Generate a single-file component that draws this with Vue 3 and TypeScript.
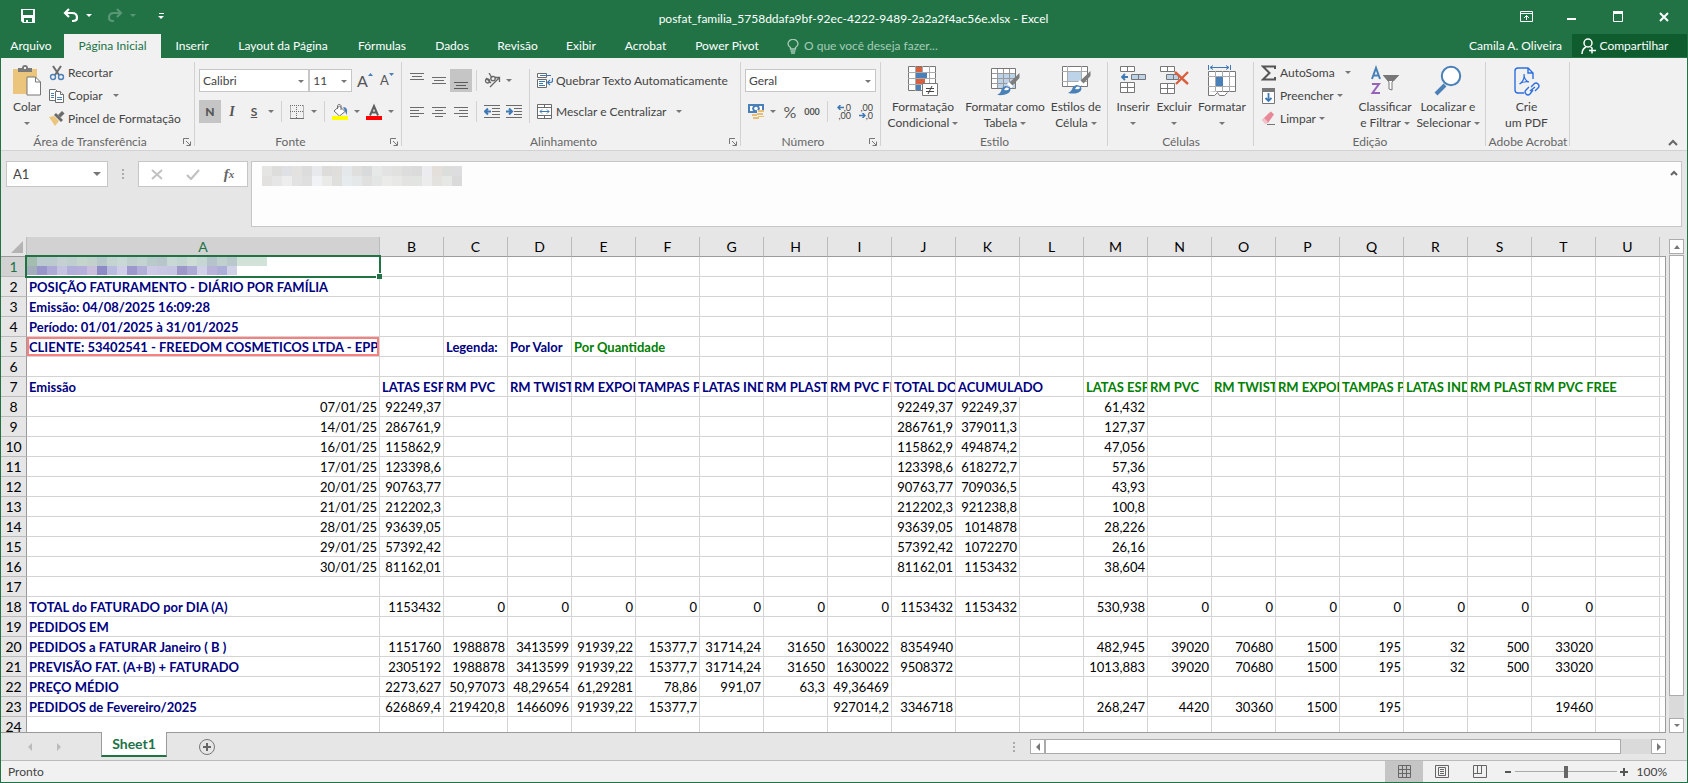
<script setup lang="ts">
import { computed, ref } from 'vue'

interface RibbonTab {
  label: string
  width: number
}

interface Cell {
  text: string
  classes: string[]
}

const tabs: RibbonTab[] = [
  { label: 'Arquivo', width: 60 },
  { label: 'Página Inicial', width: 97 },
  { label: 'Inserir', width: 62 },
  { label: 'Layout da Página', width: 120 },
  { label: 'Fórmulas', width: 78 },
  { label: 'Dados', width: 62 },
  { label: 'Revisão', width: 69 },
  { label: 'Exibir', width: 58 },
  { label: 'Acrobat', width: 71 },
  { label: 'Power Pivot', width: 92 },
]
const activeTab = ref('Página Inicial')
const fontName = ref('Calibri')
const fontSize = ref('11')
const numberFormat = ref('Geral')
const cellName = ref('A1')
const zoom = ref(100)

const columns = 'ABCDEFGHIJKLMNOPQRSTU'.split('')
const families = ['LATAS ESP', 'RM PVC', 'RM TWIST', 'RM EXPORT', 'TAMPAS PET', 'LATAS IND', 'RM PLAST', 'RM PVC FREE']

// Daily invoicing: date, value, day total, running total, quantity
const daily: string[][] = [
  ['07/01/25', '92249,37', '92249,37', '92249,37', '61,432'],
  ['14/01/25', '286761,9', '286761,9', '379011,3', '127,37'],
  ['16/01/25', '115862,9', '115862,9', '494874,2', '47,056'],
  ['17/01/25', '123398,6', '123398,6', '618272,7', '57,36'],
  ['20/01/25', '90763,77', '90763,77', '709036,5', '43,93'],
  ['21/01/25', '212202,3', '212202,3', '921238,8', '100,8'],
  ['28/01/25', '93639,05', '93639,05', '1014878', '28,226'],
  ['29/01/25', '57392,42', '57392,42', '1072270', '26,16'],
  ['30/01/25', '81162,01', '81162,01', '1153432', '38,604'],
]

const sheet: string[][] = [
  [],
  ['POSIÇÃO FATURAMENTO - DIÁRIO POR FAMÍLIA'],
  ['Emissão: 04/08/2025 16:09:28'],
  ['Período: 01/01/2025 à 31/01/2025'],
  ['CLIENTE: 53402541 - FREEDOM COSMETICOS LTDA - EPP', '', 'Legenda:', 'Por Valor', 'Por Quantidade'],
  [],
  ['Emissão', ...families, 'TOTAL DO DIA', 'ACUMULADO', '', ...families],
  ...daily.map(([date, value, total, sum, qty]) => [date, value, '', '', '', '', '', '', '', total, sum, '', qty]),
  [],
  ['TOTAL do FATURADO por DIA (A)', '1153432', '0', '0', '0', '0', '0', '0', '0', '1153432', '1153432', '', '530,938', '0', '0', '0', '0', '0', '0', '0'],
  ['PEDIDOS EM'],
  ['PEDIDOS a FATURAR Janeiro ( B )', '1151760', '1988878', '3413599', '91939,22', '15377,7', '31714,24', '31650', '1630022', '8354940', '', '', '482,945', '39020', '70680', '1500', '195', '32', '500', '33020'],
  ['PREVISÃO FAT. (A+B) + FATURADO', '2305192', '1988878', '3413599', '91939,22', '15377,7', '31714,24', '31650', '1630022', '9508372', '', '', '1013,883', '39020', '70680', '1500', '195', '32', '500', '33020'],
  ['PREÇO MÉDIO', '2273,627', '50,97073', '48,29654', '61,29281', '78,86', '991,07', '63,3', '49,36469'],
  ['PEDIDOS de Fevereiro/2025', '626869,4', '219420,8', '1466096', '91939,22', '15377,7', '', '', '927014,2', '3346718', '', '', '268,247', '4420', '30360', '1500', '195', '', '', '19460'],
  [],
]

const spilling = ['4-4', '6-10', '6-19']

const grid = computed<Cell[][]>(() =>
  sheet.map((row, r) =>
    columns.map((_, c) => {
      const text = row[c] ?? ''
      const classes: string[] = []
      if (/^[\d.,/]+$/.test(text)) classes.push('num')
      else if (text) {
        classes.push('label')
        if (c >= 12 || (r === 4 && c === 4)) classes.push('green')
        if (row[c + 1]) classes.push('clip')
      }
      if (spilling.includes(`${r}-${c}`)) classes.push('spill')
      return { text, classes }
    }),
  ),
)

const formulaMask: string[][] = [
  ['#e5e5e4', '#dddddc', '#dfe0e4', '#e3e2e0', '#dcdcdc', '#e8e9ec', '#dddcda', '#dfdedc', '#e5e8ea', '#dfdfde', '#d9dadb', '#e7e9e9', '#e3e3e3', '#e1e1e0', '#dddddd', '#dbdbdb', '#ececf0', '#e4dfda', '#dcdedc', '#dddddf'],
  ['#e2e1e0', '#e6e6e6', '#ededed', '#e2e2e2', '#dfdfe0', '#f0f2f5', '#eaeae8', '#dfdfde', '#e6ebee', '#e5e8e8', '#e0e0df', '#e4e6e6', '#ebebe9', '#e8e8e6', '#e3e3e2', '#e2e4e2', '#ececec', '#e4e2de', '#e6e8e6', '#dadadb'],
]
const cellMask: string[][] = [
  ['#a3bdb1', '#bacacd', '#bacacd', '#c4d0d2', '#bfcfcd', '#c4d5ce', '#c1d2cc', '#b7c8ca', '#c4d5d1', '#c8d8d4', '#bfcfcd', '#c3d3d1', '#b9cacb', '#b7c7c9', '#c8d8d4', '#c3d5d0', '#cdddd6', '#c6d6d3', '#b5c3cb', '#c0d0ce', '#b8c8cb', '#d1e3d9', '#d1e3d9', '#d1e3d9'],
  ['#a2aebb', '#9795ca', '#adabd6', '#c4c4e2', '#b1afd9', '#b6afdb', '#c9bfdd', '#8d8ac6', '#b9bbdf', '#cfcde8', '#9c98cd', '#b1afd8', '#cdc9e6', '#cac7e4', '#c7c4e4', '#9e98c9', '#acaad5', '#d0d0e8', '#b9b3d9', '#adafd8', '#d1d1e8'],
]
</script>

<template>
  <div class="window">
    <header class="titlebar">
      <div class="quick">
        <button class="q-save" aria-label="Salvar">
          <svg width="16" height="16" viewBox="0 0 16 16"><path d="M1 1h14v14H3l-2-2z" fill="#fff" /><path d="M3 2h10v5H3zM4 10h8v4H4z" fill="#217346" /><path d="M6 12h2v2H6z" fill="#fff" /></svg>
        </button>
        <button class="q-undo" aria-label="Desfazer">
          <svg width="16" height="16" viewBox="0 0 16 16"><path d="M6 1L2 5l4 4M2 5h7c3 0 5 1.800 5 4.500S12 13 10 13H9" fill="none" stroke="#fff" stroke-width="2.200" /></svg>
        </button>
        <button class="q-caret" aria-label="Opções de desfazer"><i class="caret white"></i></button>
        <button class="q-redo dim" aria-label="Refazer">
          <svg width="16" height="16" viewBox="0 0 16 16"><path d="M10 1l4 4-4 4M14 5H7c-3 0-5 1.800-5 4.500S4 13 6 13h1" fill="none" stroke="#fff" stroke-width="2.200" /></svg>
        </button>
        <button class="q-caret dim" aria-label="Opções de refazer"><i class="caret white"></i></button>
        <button class="q-more" aria-label="Personalizar barra"><span></span><i class="caret white"></i></button>
      </div>
      <h1 class="title">posfat_familia_5758ddafa9bf-92ec-4222-9489-2a2a2f4ac56e.xlsx - Excel</h1>
      <div class="win-buttons">
        <button aria-label="Opções de exibição da faixa"><svg width="13" height="12" viewBox="0 0 13 12" fill="none" stroke="#fff"><path d="M.5.5h12v10H.5zM0 2.500h13M6.500 9V4.500M4 7l2.500-2.500L9 7" /></svg></button>
        <button aria-label="Minimizar"><svg width="10" height="12" viewBox="0 0 10 12"><path d="M0 7h9v2H0z" fill="#fff" /></svg></button>
        <button aria-label="Maximizar"><svg width="10" height="11" viewBox="0 0 10 11"><path d="M.5.5h9v10h-9z" fill="none" stroke="#fff" /><path d="M0 0h10v3H0z" fill="#fff" /></svg></button>
        <button aria-label="Fechar"><svg width="10" height="10" viewBox="0 0 10 10"><path d="M1 1l8 8M9 1L1 9" stroke="#fff" stroke-width="2" /></svg></button>
      </div>
    </header>

    <nav class="tabs">
      <button
        v-for="tab in tabs"
        :key="tab.label"
        :class="{ active: tab.label === activeTab }"
        :style="{ width: tab.width + 'px' }"
        @click="activeTab = tab.label"
      >{{ tab.label }}</button>
      <button class="tell-me">
        <svg width="12" height="15" viewBox="0 0 12 15" fill="none" stroke="#a6cbb6" stroke-width="1.300"><path d="M3.500 10V8.500C2 7.500 1 6.500 1 5a4.800 4.500 0 0 1 10 0c0 1.500-1 2.500-2.500 3.500V10zM3.500 12h5M4 14h4" /></svg>
        <span>O que você deseja fazer...</span>
      </button>
      <span class="user">Camila A. Oliveira</span>
      <button class="share">
        <svg width="15" height="16" viewBox="0 0 15 16" fill="none" stroke="#fff" stroke-width="1.500"><circle cx="7" cy="5" r="4" /><path d="M1 16c0-4 2-6 4-7M9.500 9l1.500 1M11 9.500v6M8 12.500h7" /></svg>
        <span>Compartilhar</span>
      </button>
    </nav>

    <section class="ribbon" aria-label="Página Inicial">
      <div class="group clipboard">
        <div class="body top4">
          <button class="big w-paste">
            <svg width="30" height="32" viewBox="0 0 30 32"><path d="M1 4h24v25H1z" fill="#ecc57c" /><path d="M6 3h4a3 3 0 0 1 6 0h4v4H6z" fill="#7a7a7a" /><path d="M12 2h2v2h-2z" fill="#f1f1f1" /><path d="M15 12h8.500L28.500 17v13H15z" fill="#fff" stroke="#777" /><path d="M23.500 12v5h5" fill="none" stroke="#777" /></svg>
            <span>Colar</span><span><i class="caret"></i></span>
          </button>
          <div class="list">
            <button>
              <svg width="16" height="16" viewBox="0 0 16 16" fill="none"><path d="M4 1l6 9M12 1L6 10" stroke="#6b6b6b" stroke-width="2" /><circle cx="4" cy="12" r="2.500" stroke="#4a80b8" stroke-width="1.400" /><circle cx="12" cy="12" r="2.500" stroke="#4a80b8" stroke-width="1.400" /></svg>
              <span>Recortar</span>
            </button>
            <button>
              <svg width="16" height="16" viewBox="0 0 16 16" fill="#fff" stroke="#6f6f6f"><path d="M.5 1.500h6l2 2v9h-8z" /><path d="M6.500 3.500h5l3 3v8h-8z" /><path d="M11.500 3.500v3h3" /><path d="M2 5.500h3M2 7.500h3M2 9.500h3M8 9.500h5M8 11.500h5" stroke="#4a80b8" /></svg>
              <span>Copiar</span><i class="caret far"></i>
            </button>
            <button>
              <svg width="16" height="16" viewBox="0 0 16 16"><path d="M0 6l5-1 5 5-4 5z" fill="#ecc57c" /><path d="M5 4l2-2 7 7-2 2z" fill="#6b6b6b" /><path d="M9 4l4-4 2.500 2.500-4 4z" fill="#6b6b6b" /></svg>
              <span>Pincel de Formatação</span>
            </button>
          </div>
        </div>
        <div class="foot"><span>Área de Transferência</span><button aria-label="Mais opções" class="launch"><svg width="8" height="8" viewBox="0 0 8 8" fill="none" stroke="#777"><path d="M.5 6V.5H6M3 3l4 4M7.500 3.500v4h-4" /></svg></button></div>
      </div>

      <div class="group font">
        <div class="body rows">
          <div class="row">
            <span class="combo c-font"><select v-model="fontName" aria-label="Fonte"><option>Calibri</option></select><i class="caret"></i></span>
            <span class="combo c-size"><select v-model="fontSize" aria-label="Tamanho da fonte"><option>11</option></select><i class="caret"></i></span>
            <button class="ib grow" aria-label="Aumentar fonte"><span class="glyph g-16">A</span><svg width="5" height="3" viewBox="0 0 5 3"><path d="M0 3L2.500 0 5 3z" fill="#4a80b8" /></svg></button>
            <button class="ib grow" aria-label="Diminuir fonte"><span class="glyph g-13">A</span><svg width="5" height="3" viewBox="0 0 5 3"><path d="M0 0l2.500 3L5 0z" fill="#4a80b8" /></svg></button>
          </div>
          <div class="row">
            <button class="ib on glyph bold" aria-label="Negrito">N</button>
            <button class="ib glyph italic" aria-label="Itálico">I</button>
            <button class="ib glyph under" aria-label="Sublinhado">S</button>
            <button class="cb" aria-label="Opções de sublinhado"><i class="caret"></i></button>
            <i class="sep"></i>
            <button class="ib" aria-label="Bordas"><svg width="14" height="14" viewBox="0 0 14 14" fill="none" stroke="#6f6f6f"><path d="M.5.500v13M13.500.500v13M0 .500h14M0 6.500h14M6.500 0v13" stroke-dasharray="1 1" /><path d="M0 13.500h14" /></svg></button>
            <button class="cb" aria-label="Opções de bordas"><i class="caret"></i></button>
            <i class="sep"></i>
            <button class="ib" aria-label="Cor de preenchimento"><svg width="16" height="17" viewBox="0 0 16 17"><path d="M7.500 3L13 8.500 7.500 13 2 8z" fill="#fff" stroke="#6f6f6f" /><path d="M5.500 6V2.500a2 2 0 0 1 3.500 0V7" fill="none" stroke="#6f6f6f" /><path d="M11 4c4 0 5 3 3.500 8L13 8z" fill="#4a80b8" /><path d="M0 13h16v4H0z" fill="#ff0" /></svg></button>
            <button class="cb" aria-label="Opções de preenchimento"><i class="caret"></i></button>
            <button class="ib" aria-label="Cor da fonte"><svg width="16" height="17" viewBox="0 0 16 17"><path d="M4 12.500L8 3l4 9.500M5.500 9.500h5" fill="none" stroke="#5f5f5f" stroke-width="2" /><path d="M0 13h16v4H0z" fill="red" /></svg></button>
            <button class="cb" aria-label="Opções de cor da fonte"><i class="caret"></i></button>
          </div>
        </div>
        <div class="foot"><span>Fonte</span><button aria-label="Mais opções" class="launch"><svg width="8" height="8" viewBox="0 0 8 8" fill="none" stroke="#777"><path d="M.5 6V.5H6M3 3l4 4M7.500 3.500v4h-4" /></svg></button></div>
      </div>

      <div class="group align">
        <div class="body">
          <div class="rows">
            <div class="row">
              <button class="ib" aria-label="Alinhar em cima"><svg width="14" height="16" viewBox="0 0 14 16" stroke="#6b6b6b"><path d="M0 .5h14M2 3.500h10M0 6.500h14" /></svg></button>
              <button class="ib" aria-label="Alinhar no meio"><svg width="14" height="16" viewBox="0 0 14 16" stroke="#6b6b6b"><path d="M0 4.500h14M2 7.500h10M0 10.500h14" /></svg></button>
              <button class="ib on" aria-label="Alinhar embaixo"><svg width="14" height="16" viewBox="0 0 14 16" stroke="#5b5b5b"><path d="M0 9.500h14M2 12.500h10M0 15.500h14" /></svg></button>
              <i class="sep"></i>
              <button class="ib" aria-label="Orientação"><svg width="17" height="16" viewBox="0 0 17 16" fill="none" stroke="#666" stroke-width="1.300"><path d="M6 14L15 5M11 4.500h4.500V9" /><circle cx="3.500" cy="8" r="2" /><circle cx="9" cy="5.500" r="2.200" /><path d="M2 5l5 5M5 0l3 5" /></svg></button>
              <button class="cb" aria-label="Opções de orientação"><i class="caret"></i></button>
            </div>
            <div class="row">
              <button class="ib" aria-label="Alinhar à esquerda"><svg width="14" height="10" viewBox="0 0 14 10" stroke="#6b6b6b"><path d="M0 .5h14M0 3.500h9M0 6.500h14M0 9.500h9" /></svg></button>
              <button class="ib" aria-label="Centralizar"><svg width="14" height="10" viewBox="0 0 14 10" stroke="#6b6b6b"><path d="M0 .5h14M3 3.500h8M0 6.500h14M3 9.500h8" /></svg></button>
              <button class="ib" aria-label="Alinhar à direita"><svg width="14" height="10" viewBox="0 0 14 10" stroke="#6b6b6b"><path d="M0 .5h14M5 3.500h9M0 6.500h14M5 9.500h9" /></svg></button>
              <i class="sep"></i>
              <button class="ib" aria-label="Diminuir recuo"><svg width="16" height="13" viewBox="0 0 16 13" fill="none"><path d="M0 .5h16M8 3.500h8M8 6.500h8M8 9.500h8M0 12.500h16" stroke="#6b6b6b" /><path d="M7 6.500H1.500M4 3.500l-3 3 3 3" stroke="#3f79b5" stroke-width="2" /></svg></button>
              <button class="ib" aria-label="Aumentar recuo"><svg width="16" height="13" viewBox="0 0 16 13" fill="none"><path d="M0 .5h16M8 3.500h8M8 6.500h8M8 9.500h8M0 12.500h16" stroke="#6b6b6b" /><path d="M0 6.500h5.500M3 3.500l3 3-3 3" stroke="#3f79b5" stroke-width="2" /></svg></button>
            </div>
          </div>
          <i class="sep tall"></i>
          <div class="rows wide">
            <button class="tb">
              <svg width="16" height="16" viewBox="0 0 16 16" fill="none"><path d="M.5.5h9v4h-9zM.5 6.500h9v8h-9z" fill="#fff" stroke="#6b6b6b" /><path d="M3 2.500h11M2 8.500h6M2 10.500h4M2 12.500h6M15.500 5v2.500q0 2-2 2H11M13 7l-2.500 2.500L13 12" stroke="#3f79b5" stroke-width="1.200" /></svg>
              <span>Quebrar Texto Automaticamente</span>
            </button>
            <button class="tb">
              <svg width="16" height="16" viewBox="0 0 16 16" fill="none"><path d="M.5.5h14v14H.5z" fill="#fff" stroke="#6b6b6b" /><path d="M.5 3.500h14M.5 11.500h14M7.500.500v3M7.500 11.500v3" stroke="#6b6b6b" /><path d="M3 7.500h9M5 5.500l-2 2 2 2M10 5.500l2 2-2 2" stroke="#3f79b5" /></svg>
              <span>Mesclar e Centralizar</span><i class="caret far"></i>
            </button>
          </div>
        </div>
        <div class="foot"><span>Alinhamento</span><button aria-label="Mais opções" class="launch"><svg width="8" height="8" viewBox="0 0 8 8" fill="none" stroke="#777"><path d="M.5 6V.5H6M3 3l4 4M7.500 3.500v4h-4" /></svg></button></div>
      </div>

      <div class="group number">
        <div class="body rows">
          <div class="row"><span class="combo c-num"><select v-model="numberFormat" aria-label="Formato de número"><option>Geral</option></select><i class="caret"></i></span></div>
          <div class="row">
            <button class="ib" aria-label="Formato de contabilização"><svg width="16" height="16" viewBox="0 0 16 16"><path d="M0 0h16v9H0z" fill="#4a80b8" /><path d="M2 2h3l-1 2.500L5 7H2zM11 2h3v5h-3l1-2.500z" fill="#fff" /><circle cx="8" cy="4.500" r="1.800" fill="#fff" /><path d="M9 6h7v7H9z" fill="#f1f1f1" /><path d="M10 6h6v2h-6zM9 9h6v2H9zM10 12h6v1h-6zM4 10h5v2H4zM5 13h6v2H5z" fill="#e9bd72" /></svg></button>
            <button class="cb" aria-label="Opções de contabilização"><i class="caret"></i></button>
            <button class="ib glyph g-16" aria-label="Porcentagem">%</button>
            <button class="ib glyph zeros" aria-label="Separador de milhares">000</button>
            <i class="sep"></i>
            <button class="ib dec" aria-label="Aumentar casas decimais"><span><svg width="7" height="5" viewBox="0 0 7 5" fill="none" stroke="#3f79b5" stroke-width="1.500"><path d="M7 2.500H1M3.500 0L1 2.500 3.500 5" /></svg>,0</span><span>,00</span></button>
            <button class="ib dec" aria-label="Diminuir casas decimais"><span>,00</span><span><svg width="7" height="5" viewBox="0 0 7 5" fill="none" stroke="#3f79b5" stroke-width="1.500"><path d="M0 2.500h6M3.500 0L6 2.500 3.500 5" /></svg>,0</span></button>
          </div>
        </div>
        <div class="foot"><span>Número</span><button aria-label="Mais opções" class="launch"><svg width="8" height="8" viewBox="0 0 8 8" fill="none" stroke="#777"><path d="M.5 6V.5H6M3 3l4 4M7.500 3.500v4h-4" /></svg></button></div>
      </div>

      <div class="group style">
        <div class="body top4 bigs">
          <button class="big w-82">
            <svg width="30" height="32" viewBox="0 0 30 32"><path d="M.5 1.500h27v24H.5z" fill="#fff" stroke="#777" /><path d="M7.500 1v25M14.500 1v25M21.500 1v25M0 7.500h28M0 13.500h28M0 19.500h28" stroke="#aaa" /><path d="M8 2h6v5H8zM8 14h9v5H8z" fill="#d8603f" /><path d="M8 8h11v5H8zM8 20h5v5H8z" fill="#4a80b8" /><path d="M14.500 18.500h15v12h-15z" fill="#fff" stroke="#777" /><path d="M18 23.500h8M18 26.500h8M24 21l-4 8" stroke="#444" /></svg>
            <span>Formatação</span><span>Condicional <i class="caret"></i></span>
          </button>
          <button class="big w-82">
            <svg width="30" height="32" viewBox="0 0 30 32"><path d="M1.500 3.500h24v20h-24z" fill="#fff" /><path d="M8 9h18v15H8z" fill="#bdd3ea" /><path d="M7.500 3v20M13.500 3v20M19.500 3v20M1 8.500h24M1 13.500h24M1 18.500h24" stroke="#999" /><path d="M1.500 3.500h24v20h-24z" fill="none" stroke="#777" /><path d="M29.500 8v5L22 21l-3-3z" fill="#7d7d7d" /><path d="M19 17l4 4-2 2-4-4z" fill="#fff" /><path d="M7 30c4-2 4-4 5-7q4-4 8 0c2 4-3 8-13 7z" fill="#4a80b8" /><path d="M14 25q2-4 5-1.500 0 2.500-5 1.500z" fill="#fff" /></svg>
            <span>Formatar como</span><span>Tabela <i class="caret"></i></span>
          </button>
          <button class="big w-60">
            <svg width="30" height="32" viewBox="0 0 30 32"><path d="M1.500 1.500h25v20h-25z" fill="#fff" stroke="#777" /><path d="M6.500 1v20M20.500 1v20M1 6.500h25M1 16.500h25" stroke="#aaa" /><path d="M7 7h13v9H7z" fill="#bdd3ea" /><path d="M29.500 6v5L22 19l-3-3z" fill="#7d7d7d" /><path d="M19 15l4 4-2 2-4-4z" fill="#fff" /><path d="M7 28c4-2 4-4 5-6q4-4 8 0c2 4-3 8-13 6z" fill="#4a80b8" /><path d="M14 24q2-4 5-1.500 0 2.500-5 1.500z" fill="#fff" /></svg>
            <span>Estilos de</span><span>Célula <i class="caret"></i></span>
          </button>
        </div>
        <div class="foot"><span>Estilo</span></div>
      </div>

      <div class="group cells">
        <div class="body top4 bigs">
          <button class="big w-42">
            <svg width="28" height="32" viewBox="0 0 28 32"><path d="M1.500 1.500h14v5h-14zM8.500 1.500v5M1.500 17.500h14v10h-14zM8.500 17.500v10M1.500 22.500h14" fill="#fff" stroke="#777" /><path d="M12.500 9.500h14v5h-14zM19.500 9.500v5" fill="#bdd3ea" stroke="#777" /><path d="M9 12H3M6 9l-3 3 3 3" fill="none" stroke="#3f79b5" stroke-width="1.800" /></svg>
            <span>Inserir</span><span><i class="caret"></i></span>
          </button>
          <button class="big w-40">
            <svg width="30" height="32" viewBox="0 0 30 32"><path d="M1.500 1.500h14v5h-14zM8.500 1.500v5M1.500 18.500h14v10h-14zM8.500 18.500v10M1.500 23.500h14" fill="#fff" stroke="#777" /><path d="M7.500 9.500h12v5h-12zM14.500 9.500v5" fill="#bdd3ea" stroke="#777" /><path d="M16 7l13 12M29 7L17 19" fill="none" stroke="#d8603f" stroke-width="2.400" /></svg>
            <span>Excluir</span><span><i class="caret"></i></span>
          </button>
          <button class="big w-56">
            <svg width="30" height="32" viewBox="0 0 30 32"><path d="M1.500 6.500h27v20h-27z" fill="#fff" stroke="#777" /><path d="M8.500 6v21M15.500 6v21M22.500 6v21M1 11.500h27M1 21.500h27" stroke="#aaa" /><path d="M9 12h7v9H9z" fill="#4a80b8" /><path d="M1.500 26v4.500h6l3-3 2 3h5l3-3" fill="#fff" stroke="#777" /><path d="M1.500 0v5M23.500 0v5M4 2.500h17M6 .5l-3 2 3 2M19 .5l3 2-3 2" fill="none" stroke="#3f79b5" /></svg>
            <span>Formatar</span><span><i class="caret"></i></span>
          </button>
        </div>
        <div class="foot"><span>Células</span></div>
      </div>

      <div class="group edit">
        <div class="body top4">
          <div class="list">
            <button>
              <svg width="16" height="16" viewBox="0 0 16 16"><path d="M14 4V1.500H2L8.500 8 2 14.500h12V12" fill="none" stroke="#555" stroke-width="2" /></svg>
              <span>AutoSoma</span><i class="caret far"></i>
            </button>
            <button>
              <svg width="16" height="16" viewBox="0 0 16 16" fill="none"><path d="M1.500.5h12v15h-12z" fill="#fff" stroke="#777" /><path d="M1 0h13v4H1z" fill="#777" /><path d="M7.500 5v8M4.500 10l3 3 3-3" stroke="#3f79b5" stroke-width="1.800" /></svg>
              <span>Preencher</span><i class="caret"></i>
            </button>
            <button>
              <svg width="16" height="16" viewBox="0 0 16 16"><path d="M8 2l2-1.500 3 3-6 8.500H4L1 9z" fill="#e8899a" /><path d="M1 9l2-2 4 4-2 2H4z" fill="#f4c4cc" /><path d="M6 13.500h8" stroke="#777" /></svg>
              <span>Limpar</span><i class="caret"></i>
            </button>
          </div>
          <button class="big w-58">
            <svg width="30" height="32" viewBox="0 0 30 32" fill="none"><path d="M2 14L6 3l4 11M3.500 10.500h5" stroke="#4a80b8" stroke-width="2" /><path d="M2 19h7L2.500 28H10" stroke="#9663b8" stroke-width="2" /><path d="M13.500 10.500h15L22 17v8l-3-1v-7z" fill="#fff" stroke="#777" /><path d="M13 10h16l-5 6h-6z" fill="#777" /></svg>
            <span>Classificar</span><span>e Filtrar <i class="caret"></i></span>
          </button>
          <button class="big w-68">
            <svg width="30" height="32" viewBox="0 0 30 32"><path d="M3 29l9-9" stroke="#4a80b8" stroke-width="4" /><circle cx="18" cy="11" r="9.200" fill="#fff" stroke="#4a80b8" stroke-width="2" /></svg>
            <span>Localizar e</span><span>Selecionar <i class="caret"></i></span>
          </button>
        </div>
        <div class="foot"><span>Edição</span></div>
      </div>

      <div class="group acrobat">
        <div class="body top4 bigs center">
          <button class="big w-60">
            <svg width="26" height="32" viewBox="0 0 26 32" fill="none" stroke="#2d6fe0" stroke-width="1.400"><path d="M10 28H4a3 3 0 0 1-3-3V6a3 3 0 0 1 3-3h10l5 5v6M14 3.500v4.500h5" /><path d="M5.500 19c3-2 5-6 4.500-10 0 5 2 7 5 8-3-.5-7 0-9.500 2z" stroke-width="1.200" /><path d="M17 22l3-3q2-2 4 0t0 4l-3 3M19 25l-3 4q-2 2-4 0t0-4l3-3M16 26l5-4" /></svg>
            <span>Crie</span><span>um PDF</span>
          </button>
        </div>
        <div class="foot"><span>Adobe Acrobat</span></div>
      </div>
      <button class="collapse" aria-label="Recolher faixa"><svg width="10" height="7" viewBox="0 0 10 7"><path d="M1 6l4-4 4 4" fill="none" stroke="#666" stroke-width="2" /></svg></button>
    </section>

    <section class="formula-bar">
      <div class="name-box"><input v-model="cellName" aria-label="Caixa de nome" /><button aria-label="Nomes"><i class="caret big-caret"></i></button></div>
      <div class="dots"><i></i><i></i><i></i></div>
      <div class="fx">
        <button aria-label="Cancelar"><svg width="12" height="11" viewBox="0 0 12 11"><path d="M1 1l10 9M11 1L1 10" stroke="#c2c2c2" stroke-width="2" /></svg></button>
        <button aria-label="Inserir"><svg width="14" height="11" viewBox="0 0 14 11"><path d="M1 6l4 4 8-9" fill="none" stroke="#c2c2c2" stroke-width="2.200" /></svg></button>
        <button aria-label="Inserir função" class="fx-glyph">f<sub>x</sub></button>
      </div>
      <div class="formula">
        <textarea aria-label="Barra de fórmulas"></textarea>
        <div class="mask">
          <div v-for="(line, i) in formulaMask" :key="i"><i v-for="(color, j) in line" :key="j" :style="{ background: color }"></i></div>
        </div>
        <button aria-label="Recolher barra de fórmulas"><svg width="8" height="6" viewBox="0 0 8 6"><path d="M1 5l3-3 3 3" fill="none" stroke="#666" stroke-width="2" /></svg></button>
      </div>
    </section>

    <main class="workspace">
      <div class="grid">
        <table>
          <colgroup><col class="c-head" /><col class="c-a" /><col v-for="c in 20" :key="c" class="c-std" /><col /></colgroup>
          <thead>
            <tr>
              <th class="corner"><svg width="12" height="12" viewBox="0 0 12 12"><path d="M12 0v12H0z" fill="#b4b4b4" /></svg></th>
              <th v-for="(name, c) in columns" :key="name" scope="col" :class="{ current: c === 0 }">{{ name }}</th>
              <th class="rest"></th>
            </tr>
          </thead>
          <tbody>
            <tr v-for="(row, r) in grid" :key="r">
              <th scope="row" :class="{ current: r === 0 }">{{ r + 1 }}</th>
              <td v-for="(cell, c) in row" :key="c" :class="cell.classes">
                {{ cell.text }}
                <div v-if="r === 0 && c === 0" class="selection">
                  <div class="mask">
                    <div v-for="(line, i) in cellMask" :key="i"><i v-for="(color, j) in line" :key="j" :style="{ background: color }"></i></div>
                  </div>
                  <i class="handle"></i>
                </div>
                <div v-if="r === 4 && c === 0" class="highlight"></div>
              </td>
              <td class="rest"></td>
            </tr>
          </tbody>
        </table>
      </div>
      <div class="vscroll">
        <button aria-label="Rolar para cima"><i class="caret up"></i></button>
        <div class="thumb"></div>
        <div class="track"></div>
        <button aria-label="Rolar para baixo"><i class="caret"></i></button>
      </div>
    </main>

    <div class="sheets">
      <button class="arrow" aria-label="Planilha anterior"><i class="tri left pale"></i></button>
      <button class="arrow" aria-label="Próxima planilha"><i class="tri right pale"></i></button>
      <button class="sheet">Sheet1</button>
      <button class="add" aria-label="Nova planilha"><svg width="18" height="18" viewBox="0 0 18 18"><circle cx="9" cy="9" r="7.500" fill="none" stroke="#777" /><path d="M5 9h8M9 5v8" stroke="#666" stroke-width="2" /></svg></button>
      <div class="dots push"><i></i><i></i><i></i></div>
      <div class="hscroll">
        <button aria-label="Rolar à esquerda"><i class="tri left"></i></button>
        <div class="thumb"></div>
        <div class="track"></div>
        <button aria-label="Rolar à direita"><i class="tri right"></i></button>
      </div>
    </div>

    <footer class="status">
      <span class="ready">Pronto</span>
      <button class="view on" aria-label="Normal"><svg width="13" height="13" viewBox="0 0 13 13" fill="none" stroke="#666"><path d="M.5.5h12v12H.5zM4.500 0v13M8.500 0v13M0 4.500h13M0 8.500h13" /></svg></button>
      <button class="view" aria-label="Layout da página"><svg width="14" height="13" viewBox="0 0 14 13" fill="none" stroke="#666"><path d="M.5.5h13v12H.5zM3.500 2.500h7v8h-7zM5 4.500h4M5 6.500h4M5 8.500h4" /></svg></button>
      <button class="view" aria-label="Visualização de quebra de página"><svg width="14" height="13" viewBox="0 0 14 13" fill="none" stroke="#666"><path d="M.5.5h13v12H.5zM4.500 0v8M8.500 0v8M0 8.500h9" /></svg></button>
      <button class="step" aria-label="Reduzir"><svg width="6" height="8" viewBox="0 0 6 8"><path d="M0 4h6" stroke="#555" stroke-width="2" /></svg></button>
      <input v-model="zoom" type="range" min="0" max="200" aria-label="Zoom" />
      <button class="step" aria-label="Ampliar"><svg width="8" height="8" viewBox="0 0 8 8"><path d="M0 4h8M4 0v8" stroke="#555" stroke-width="2" /></svg></button>
      <span class="percent">{{ zoom }}%</span>
    </footer>
  </div>
</template>

<style>
html,
body {
  margin: 0;
  overflow: hidden;
}
</style>

<style scoped>
* {
  box-sizing: border-box;
}
.window {
  height: 100vh;
  display: flex;
  flex-direction: column;
  border: 1px solid #217346;
  background: #e6e6e6;
  font: 12px/16px Lato, 'Open Sans', sans-serif;
  color: #444;
  overflow: hidden;
}
button,
input,
select,
textarea {
  font: inherit;
  color: inherit;
  border: 0;
  margin: 0;
  padding: 0;
  background: transparent;
  outline: 0;
}
button {
  display: flex;
  align-items: center;
  justify-content: center;
  white-space: nowrap;
}
svg {
  display: block;
  flex: none;
}
.caret {
  display: inline-block;
  flex: none;
  border: 3px solid transparent;
  border-top-color: #777;
  border-bottom: 0;
  vertical-align: middle;
}
.caret.white {
  border-top-color: #fff;
}
.caret.up {
  border-top: 0;
  border-bottom: 4px solid #777;
}
.big-caret {
  border-width: 4px 4px 0;
}
.tri {
  border: 4px solid transparent;
}
.tri.left {
  border-left: 0;
  border-right-color: #777;
}
.tri.right {
  border-right: 0;
  border-left-color: #777;
}
.tri.left.pale {
  border-right-color: #bbb;
}
.tri.right.pale {
  border-left-color: #bbb;
}

/* Title bar */
.titlebar {
  display: flex;
  align-items: center;
  height: 33px;
  flex: none;
  background: #217346;
  color: #fff;
}
.quick {
  flex: 1;
  display: flex;
  align-items: center;
  padding: 0 0 4px 19px;
}
.quick button {
  height: 20px;
}
.q-save {
  width: 16px;
  margin-right: 27px;
}
.q-undo,
.q-redo {
  width: 16px;
}
.q-caret {
  width: 20px;
  margin-right: 8px;
}
.dim {
  opacity: 0.25;
}
.q-more {
  flex-direction: column;
  gap: 2px;
  margin-left: 7px;
}
.q-more span {
  width: 5px;
  height: 1px;
  background: #fff;
}
.title {
  margin: 0;
  padding-top: 3px;
  font-size: 12px;
  font-weight: 400;
  white-space: nowrap;
}
.win-buttons {
  flex: 1;
  display: flex;
  justify-content: flex-end;
  padding-bottom: 2px;
}
.win-buttons button {
  width: 46px;
  height: 30px;
}

/* Ribbon tabs */
.tabs {
  display: flex;
  height: 24px;
  flex: none;
  background: #217346;
  color: #fff;
}
.tabs > button {
  flex: none;
}
.tabs > button:first-child {
  margin-right: 3px;
}
.tabs .active {
  background: #f1f1f1;
  color: #217346;
}
.tell-me {
  gap: 5px;
  padding-left: 14px;
  color: #a6cbb6;
}
.user {
  margin-left: auto;
  padding-right: 10px;
  line-height: 24px;
  white-space: nowrap;
}
.share {
  width: 115px;
  height: 23px;
  gap: 4px;
  padding-right: 10px;
  background: #0f5c2f;
}

/* Ribbon */
.ribbon {
  display: flex;
  height: 93px;
  flex: none;
  background: #f1f1f1;
  border-bottom: 1px solid #d2d2d2;
}
.group {
  display: flex;
  flex-direction: column;
  flex: none;
  background: linear-gradient(#d2d2d2, #d2d2d2) right 4px / 1px 84px no-repeat;
}
.clipboard {
  width: 194px;
}
.font {
  width: 207px;
}
.align {
  width: 339px;
}
.number {
  width: 140px;
}
.style {
  width: 227px;
}
.cells {
  width: 146px;
}
.edit {
  width: 232px;
}
.acrobat {
  width: 84px;
}
.body {
  display: flex;
  flex: 1;
  padding: 11px 4px 0;
}
.body.top4 {
  padding-top: 3px;
}
.body.bigs {
  padding-left: 1px;
}
.cells .body.bigs {
  padding-left: 4px;
}
.body.center {
  justify-content: center;
}
.rows {
  display: flex;
  flex-direction: column;
  gap: 8px;
}
.row {
  display: flex;
  align-items: center;
  height: 23px;
}
.wide {
  padding-left: 3px;
}
.foot {
  position: relative;
  height: 16px;
  padding-right: 16px;
  text-align: center;
  color: #666;
  white-space: nowrap;
}
.style .foot,
.cells .foot,
.edit .foot,
.acrobat .foot {
  padding-right: 0;
}
.launch {
  position: absolute;
  right: 4px;
  top: 4px;
}
.ib {
  width: 22px;
  height: 23px;
  flex: none;
}
.cb {
  width: 12px;
  height: 23px;
  flex: none;
}
.on {
  background: #c5c5c5;
}
.sep {
  width: 1px;
  height: 21px;
  margin: 0 4px;
  background: #d2d2d2;
}
.sep.tall {
  height: 54px;
}
.glyph {
  color: #555;
}
.g-16 {
  font-size: 16px;
}
.g-13 {
  font-size: 13px;
}
.bold {
  font-weight: 900;
}
.italic {
  font: italic 700 14px 'Liberation Serif', serif;
}
.under {
  font-weight: 700;
  text-decoration: underline;
}
.zeros {
  font-size: 9px;
  font-weight: 700;
}
.grow {
  align-items: flex-start;
  line-height: 23px;
}
.grow svg {
  margin-top: 4px;
}
.dec {
  flex-direction: column;
  align-items: flex-end;
  padding-right: 3px;
  font-size: 9px;
  line-height: 8px;
}
.dec span {
  display: flex;
  align-items: center;
}
.combo {
  position: relative;
  height: 23px;
  border: 1px solid #c6c6c6;
  background: #fff;
}
.combo select {
  appearance: none;
  width: 100%;
  height: 21px;
  padding-left: 3px;
}
.combo .caret {
  position: absolute;
  right: 4px;
  top: 10px;
  pointer-events: none;
}
.c-font {
  width: 111px;
}
.c-size {
  width: 43px;
  margin-right: 2px;
}
.c-num {
  width: 131px;
}
.tb {
  height: 23px;
  gap: 3px;
  justify-content: flex-start;
}
.caret.far {
  margin-left: 7px;
}
.list {
  display: flex;
  flex-direction: column;
  align-items: flex-start;
}
.list button {
  height: 23px;
  gap: 3px;
}
.edit .list {
  width: 98px;
  padding-left: 3px;
}
.big {
  flex-direction: column;
  justify-content: flex-start;
  flex: none;
  padding-top: 4px;
}
.big svg {
  margin-bottom: 2px;
}
.big span {
  height: 16px;
}
.w-paste {
  width: 44px;
}
.w-82 {
  width: 82px;
}
.w-68 {
  width: 68px;
}
.w-60 {
  width: 60px;
}
.w-58 {
  width: 58px;
}
.w-56 {
  width: 56px;
}
.w-42 {
  width: 42px;
}
.w-40 {
  width: 40px;
}
.collapse {
  margin: auto 9px 4px auto;
}

/* Formula bar */
.formula-bar {
  display: flex;
  align-items: flex-start;
  flex: none;
  padding: 10px 5px 10px;
}
.name-box,
.fx {
  display: flex;
  height: 26px;
  border: 1px solid #c6c6c6;
  background: #fff;
}
.name-box {
  width: 102px;
}
.name-box input {
  flex: 1;
  min-width: 0;
  padding-left: 6px;
  font-size: 13px;
}
.name-box button {
  width: 20px;
}
.dots {
  display: flex;
  flex-direction: column;
  gap: 2px;
  margin: 8px 14px 0;
}
.dots i {
  width: 2px;
  height: 2px;
  background: #aaa;
}
.fx {
  width: 110px;
}
.fx button {
  flex: 1;
}
.fx .fx-glyph {
  font: italic 700 15px 'Liberation Serif', serif;
  color: #666;
}
.fx-glyph sub {
  font-size: 11px;
}
.formula {
  position: relative;
  flex: 1;
  height: 66px;
  margin-left: 3px;
  border: 1px solid #c6c6c6;
  background: #fdfdfd;
}
.formula textarea {
  display: block;
  width: 100%;
  height: 64px;
  resize: none;
}
.formula .mask {
  position: absolute;
  left: 10px;
  top: 4px;
}
.formula button {
  position: absolute;
  right: 3px;
  top: 8px;
}
.mask > div {
  display: flex;
}
.mask i {
  width: 10px;
  height: 9px;
}
.formula .mask i {
  height: 10px;
}

/* Worksheet */
.workspace {
  flex: 1;
  min-height: 0;
  display: flex;
}
.grid {
  flex: 1;
  min-width: 0;
  overflow: hidden;
  border-bottom: 1px solid #9b9b9b;
}
table {
  width: 100%;
  table-layout: fixed;
  border-collapse: separate;
  border-spacing: 0;
  font: 13px/18px Lato, 'Liberation Sans', sans-serif;
  color: #000;
}
.c-head {
  width: 26px;
}
.c-a {
  width: 353px;
}
.c-std {
  width: 64px;
}
th,
td {
  height: 20px;
  padding: 1px 2px 0;
  border: 0 solid #d4d4d4;
  border-width: 0 1px 1px 0;
  white-space: nowrap;
  line-height: 18px;
}
td {
  position: relative;
}
tbody {
  background: #fff;
}
th {
  padding: 1px 0 0;
  font-weight: 400;
  font-size: 14px;
  text-align: center;
  background: #e6e6e6;
}
thead th {
  border-bottom-color: #9b9b9b;
  border-right-color: #bbb;
}
tbody th {
  border-right-color: #9b9b9b;
  border-bottom-color: #bbb;
}
.corner svg {
  margin-left: 10px;
}
th.current {
  background: #d2d2d2;
  color: #217346;
}
thead .rest {
  border-right: 0;
}
tbody .rest {
  border-right-color: #9b9b9b;
}
.num {
  text-align: right;
}
.label {
  font-weight: 700;
  color: #000080;
}
.green {
  color: #008000;
}
.clip {
  overflow: hidden;
}
.spill {
  border-right-color: transparent;
  z-index: 1;
}
.selection {
  position: absolute;
  inset: -2px -2px -2px -2px;
  border: 2px solid #217346;
  z-index: 2;
}
.handle {
  position: absolute;
  right: -3px;
  bottom: -3px;
  width: 6px;
  height: 6px;
  background: #217346;
  border: solid #fff;
  border-width: 1px 0 0 1px;
}
.highlight {
  position: absolute;
  inset: 0;
  border: 2px solid #fa8080;
}
.vscroll {
  display: flex;
  flex-direction: column;
  width: 21px;
  padding: 2px 3px 0;
}
.vscroll button {
  height: 15px;
  border: 1px solid #ababab;
  background: #fff;
}
.thumb {
  border: 1px solid #ababab;
  background: #fff;
}
.track {
  background: #dadada;
}
.vscroll .thumb {
  flex: 20;
  margin-top: 1px;
}
.vscroll .track {
  flex: 1;
}

/* Sheet tabs */
.sheets {
  display: flex;
  align-items: center;
  height: 27px;
  flex: none;
  padding-right: 21px;
}
.arrow {
  width: 29px;
}
.arrow:first-child {
  margin-left: 14px;
}
.sheet {
  align-self: flex-start;
  width: 66px;
  height: 25px;
  margin: -1px 31px 0 28px;
  position: relative;
  background: #fff;
  border: solid #9b9b9b;
  border-width: 0 1px;
  border-bottom: 2px solid #217346;
  color: #217346;
  font-size: 14px;
  font-weight: 700;
}
.push {
  margin: 0 15px 0 auto;
}
.hscroll {
  display: flex;
  width: calc(38% + 3px);
  height: 15px;
}
.hscroll button {
  width: 15px;
  border: 1px solid #ababab;
  background: #fff;
}
.hscroll .thumb {
  flex: 19;
}
.hscroll .track {
  flex: 1;
}

/* Status bar */
.status {
  display: flex;
  align-items: center;
  height: 22px;
  flex: none;
  padding-right: 20px;
  background: #f1f1f1;
  border-top: 1px solid #bbb;
}
.ready {
  flex: 1;
  padding-left: 7px;
}
.view {
  width: 38px;
  height: 21px;
}
.step {
  width: 14px;
  height: 21px;
}
.view + .step {
  margin-left: 2px;
}
.status input {
  appearance: none;
  width: 102px;
  height: 12px;
  background: linear-gradient(#aaa, #aaa) center / 100% 1px no-repeat;
}
.status input::-webkit-slider-thumb {
  appearance: none;
  width: 4px;
  height: 12px;
  background: #666;
}
.percent {
  width: 36px;
  text-align: right;
}
</style>
